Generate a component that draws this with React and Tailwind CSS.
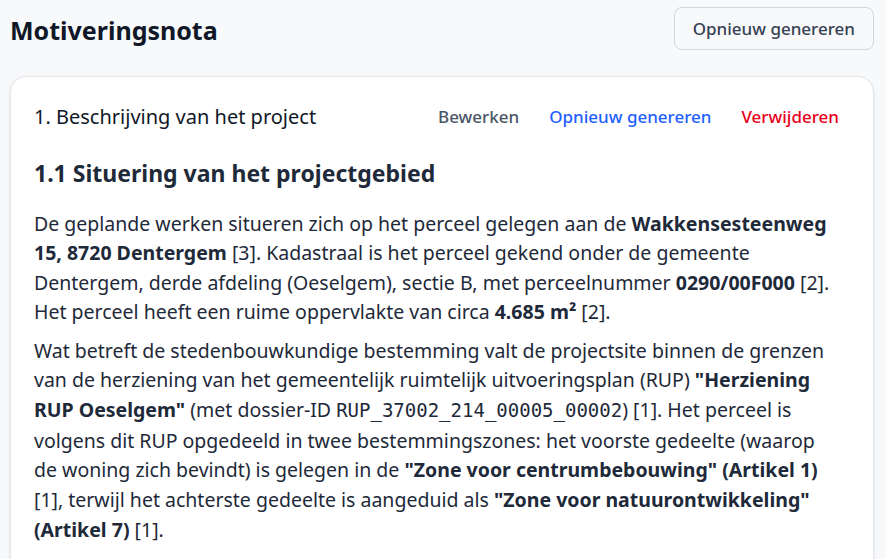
function SectionActions() {
  return (
    <div className="flex items-center gap-[6px] text-[17px] font-medium">
      <button className="px-3 text-gray-600">Bewerken</button>
      <button className="px-3 text-[#1f5fff]">Opnieuw genereren</button>
      <button className="px-3 text-[#e8001c]">Verwijderen</button>
    </div>
  );
}

function Code({ children }) {
  return (
    <code className="text-[19px]" style={{ fontFamily: '"DejaVu Sans Mono", "Liberation Mono", monospace' }}>
      {children}
    </code>
  );
}

export default function App() {
  return (
    <div
      className="min-h-screen bg-[#f8f9fb] pl-[10px] pr-[12px] pt-[7px] text-gray-800"
      style={{ fontFamily: '"Noto Sans", "Open Sans", sans-serif' }}
    >
      <div className="flex items-center justify-between">
        <h1 className="mt-[4px] text-[25px] font-bold text-gray-900">Motiveringsnota</h1>
        <button className="h-[43px] rounded-lg border border-gray-300 px-[18px] text-[17px] font-medium text-gray-700">
          Opnieuw genereren
        </button>
      </div>

      <div className="mt-[26px] rounded-2xl border border-gray-200 bg-white pl-[23px] pr-[22px] pt-[26px] pb-8 shadow-sm">
        <div className="flex items-center justify-between">
          <h2 className="text-[20px] leading-7 text-gray-900">1. Beschrijving van het project</h2>
          <SectionActions />
        </div>

        <h3 className="mt-[26px] text-[23px] font-bold leading-8 text-gray-800">1.1 Situering van het projectgebied</h3>

        <div className="mt-[20px] text-[19.5px]">
          <p className="leading-[29.4px]">
            De geplande werken situeren zich op het perceel gelegen aan de <strong>Wakkensesteenweg</strong>
            <br />
            <strong>15, 8720 Dentergem</strong> [3]. Kadastraal is het perceel gekend onder de gemeente
            <br />
            Dentergem, derde afdeling (Oeselgem), sectie B, met perceelnummer <strong>0290/00F000</strong> [2].
            <br />
            Het perceel heeft een ruime oppervlakte van circa <strong>4.685 m²</strong> [2].
          </p>
          <p className="mt-[9px] leading-[29.7px]">
            Wat betreft de stedenbouwkundige bestemming valt de projectsite binnen de grenzen
            <br />
            van de herziening van het gemeentelijk ruimtelijk uitvoeringsplan (RUP) <strong>"Herziening</strong>
            <br />
            <strong>RUP Oeselgem"</strong> (met dossier-ID <Code>RUP_37002_214_00005_00002</Code>) [1]. Het perceel is
            <br />
            volgens dit RUP opgedeeld in twee bestemmingszones: het voorste gedeelte (waarop
            <br />
            de woning zich bevindt) is gelegen in de <strong>"Zone voor centrumbebouwing" (Artikel 1)</strong>
            <br />
            [1], terwijl het achterste gedeelte is aangeduid als <strong>"Zone voor natuurontwikkeling"</strong>
            <br />
            <strong>(Artikel 7)</strong> [1].
          </p>
        </div>
      </div>
    </div>
  );
}
